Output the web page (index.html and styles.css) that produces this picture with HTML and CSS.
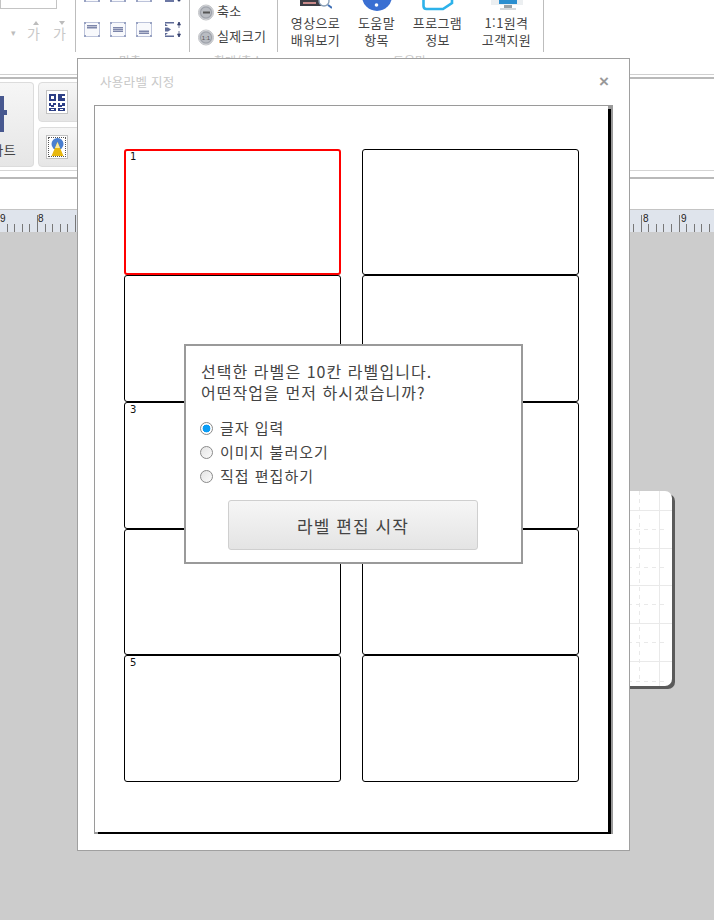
FILE: index.html
```html
<!DOCTYPE html>
<html lang="ko">
<head>
<meta charset="utf-8">
<title>사용라벨 지정</title>
<link rel="stylesheet" href="styles.css">
</head>
<body>
<svg class="defs" width="0" height="0" aria-hidden="true">
  <defs>
    <g id="frame">
      <rect x="0.5" y="0.5" width="15" height="14" fill="#f8f9fc" stroke="#bcc3da"/>
      <rect x="0" y="0" width="2" height="2" fill="#98a2c2"/><rect x="14" y="0" width="2" height="2" fill="#98a2c2"/>
      <rect x="0" y="13" width="2" height="2" fill="#98a2c2"/><rect x="14" y="13" width="2" height="2" fill="#98a2c2"/>
    </g>
  </defs>
</svg>
<div class="app">
  <header class="ribbon-top">
    <section class="group group-font">
      <div class="group-body">
        <div class="font-box"></div>
        <div class="font-tools">
          <span class="caret">▾</span>
          <span class="size-up">가<i class="arrow-up"></i></span>
          <span class="size-down">가<i class="arrow-down"></i></span>
        </div>
      </div>
    </section>
    <section class="group group-align">
      <div class="group-body">
        <div class="icon-grid">
          <svg class="ic" viewBox="0 0 17 15"><use href="#frame"/><path d="M3 3h10v3H3z" fill="#7d86aa"/></svg>
          <svg class="ic" viewBox="0 0 17 15"><use href="#frame"/><path d="M3 5.5h10v4H3z" fill="#7d86aa"/></svg>
          <svg class="ic" viewBox="0 0 17 15"><use href="#frame"/><path d="M3 8.500h10v3H3z" fill="#7d86aa"/></svg>
          <svg class="ic ic-last" viewBox="0 0 17 15"><path d="M0 1h9v2H0zM0 5h7v2H0zM0 9h7v2H0zM0 13h9v2H0z" fill="#6c78a4"/><circle cx="14" cy="13" r="1.5" fill="#33406e"/></svg>
          <svg class="ic" viewBox="0 0 17 15"><use href="#frame"/><path d="M3 3h10v1.500H3zM3 5h10v1.500H3z" fill="#7d86aa"/></svg>
          <svg class="ic" viewBox="0 0 17 15"><use href="#frame"/><path d="M3 5h10v1.500H3zM3 7h10v1.500H3zM3 9h10v1H3z" fill="#7d86aa"/></svg>
          <svg class="ic" viewBox="0 0 17 15"><use href="#frame"/><path d="M3 8.500h10v1.500H3zM3 10.500h10v1.500H3z" fill="#7d86aa"/></svg>
          <svg class="ic ic-last" viewBox="0 0 17 15"><path d="M0 0h9v1.500H0l3 2.500H0v1.500h3L6 7.500 3 9.500H0V11h3l-3 2.500h9V15H0z" fill="#5f6b97"/><path d="M14 0v6M14 9v6M12.500 3l1.500-3 1.500 3zM12.500 12l1.500 3 1.500-3z" fill="#33406e" stroke="#33406e" stroke-width=".7"/></svg>
        </div>
      </div>
      <div class="group-label label-align">맞춤</div>
    </section>
    <section class="group group-zoom">
      <div class="group-body">
        <div class="zoom-row"><span class="zoom-ic"><i class="zoom-minus"></i></span><span>축소</span></div>
        <div class="zoom-row"><span class="zoom-ic"><b>1:1</b></span><span>실제크기</span></div>
      </div>
      <div class="group-label label-zoom">확대/축소</div>
    </section>
    <section class="group group-help">
      <div class="group-body help-body">
        <div class="help-item">
          <svg class="help-ic" viewBox="0 0 32 11"><rect x="0" y="0" width="26" height="6" fill="#3c3c44"/><rect x="3" y="2" width="13" height="2" fill="#c98a8a"/><circle cx="24" cy="1" r="5" fill="#fff" stroke="#8aa0b8" stroke-width="1.4"/><path d="M28 5l4 3" stroke="#3f6fb5" stroke-width="2"/></svg>
          <span>영상으로<br>배워보기</span>
        </div>
        <div class="help-item">
          <svg class="help-ic" viewBox="0 0 32 11"><circle cx="16" cy="-4" r="15" fill="#3a6fd2"/><circle cx="15.5" cy="5" r="1.8" fill="#fff"/></svg>
          <span>도움말<br>항목</span>
        </div>
        <div class="help-item">
          <svg class="help-ic" viewBox="0 0 32 11"><path d="M1.500 -4V6q0 3 3 3H21l9-6V-4" fill="#fff" stroke="#2db2ea" stroke-width="2.600"/></svg>
          <span>프로그램<br>정보</span>
        </div>
        <div class="help-item help-last">
          <svg class="help-ic" viewBox="0 0 32 11"><rect x="0" y="0" width="32" height="5" fill="#eceff1"/><rect x="8" y="0" width="18" height="4" fill="#2b8fd0"/><rect x="13" y="5" width="8" height="3" fill="#9aa3a8"/><rect x="9" y="8" width="16" height="2" fill="#d5d9dc"/></svg>
          <span>1:1원격<br>고객지원</span>
        </div>
      </div>
      <div class="group-label label-help">도움말</div>
    </section>
  </header>

  <div class="ribbon-second">
    <div class="big-btn">
      <svg class="plus" viewBox="0 0 8 36"><path d="M0 0h4v14h3v5H4v17H0z" fill="#47588f"/></svg>
      <span class="big-label">차트</span>
    </div>
    <div class="small-col">
      <div class="small-btn">
        <span class="thumb">
          <svg viewBox="0 0 16 17" width="16" height="17"><path fill="#2d3f86" d="M0 0h7v7H0zM9 0h7v2h-3v2h3v3H9zM0 9h2v2h2V9h3v2H5v2H2v-1H0zM9 9h2v2h2V9h3v3h-3v1H9zM0 14h7v3H0zM9 14h7v3H9z"/><path fill="#fff" d="M2 2h3v3H2zM2 15h3v1H2zM11 15h3v1h-3z"/></svg>
        </span>
      </div>
      <div class="small-btn">
        <span class="thumb thumb-photo">
          <svg viewBox="0 0 13 18" width="13" height="18"><circle cx="6.500" cy="6" r="6" fill="#4a7fd0"/><path d="M6.500 4l6 14H.5z" fill="#e8b80f"/><path d="M6.500 4l2.500 6H4z" fill="#f6e9a6"/></svg>
        </span>
      </div>
    </div>
  </div>

  <div class="ribbon-gap"></div>

  <div class="ruler">
    <div class="ruler-part ruler-left">
      <span class="num num-a">9</span>
      <span class="num num-b">8</span>
    </div>
    <div class="ruler-part ruler-right">
      <span class="num num-c">8</span>
      <span class="num num-d">9</span>
    </div>
  </div>

  <main class="canvas">
    <div class="paper">
      <svg class="paper-grid" viewBox="0 0 172 195" width="172" height="195">
        <g stroke="#e9e9e9" fill="none">
          <path d="M0 19.500H172M0 57.500H172M0 94.500H172M0 132.500H172M0 170.500H172M159.500 0V195"/>
          <path stroke-dasharray="4 4" d="M0 38.500H168M0 76.500H168M0 113.500H168M0 151.500H168M0 190.500H168M139.500 0V192"/>
        </g>
      </svg>
    </div>
  </main>

  <div class="dialog">
    <div class="dialog-head">
      <span class="dialog-title">사용라벨 지정</span>
      <span class="dialog-close">×</span>
    </div>
    <div class="sheet">
      <div class="cell cell-active"><span>1</span></div>
      <div class="cell"></div>
      <div class="cell"></div>
      <div class="cell"></div>
      <div class="cell"><span>3</span></div>
      <div class="cell"></div>
      <div class="cell"></div>
      <div class="cell"></div>
      <div class="cell"><span>5</span></div>
      <div class="cell"></div>
    </div>
    <div class="prompt">
      <p class="prompt-text">선택한 라벨은 10칸 라벨입니다.<br>어떤작업을 먼저 하시겠습니까?</p>
      <ul class="choices">
        <li><i class="radio radio-on"></i>글자 입력</li>
        <li><i class="radio"></i>이미지 불러오기</li>
        <li><i class="radio"></i>직접 편집하기</li>
      </ul>
      <button class="start-btn" type="button">라벨 편집 시작</button>
    </div>
  </div>
</div>
</body>
</html>
```

FILE: styles.css
```css
* { box-sizing: border-box; }
html, body { margin: 0; padding: 0; height: 100%; }
body {
  width: 714px; height: 920px; overflow: hidden; background: #fff;
  font-family: "Noto Sans CJK KR", "Noto Sans", sans-serif; color: #333;
}
.defs { position: absolute; }
.app { position: relative; width: 714px; height: 920px; display: flex; flex-direction: column; overflow: hidden; }

/* top ribbon */
.ribbon-top { display: flex; height: 74px; flex: none; overflow: hidden; }
.group { flex: none; height: 74px; }
.group-body { height: 52px; border-right: 1px solid #bdbdbd; overflow: hidden; }
.group-label { font-size: 12px; line-height: 16px; color: #c8c8c8; margin-top: 1px; }
.group-font { width: 76px; }
.group-align { width: 114px; }
.group-zoom { width: 88px; }
.group-help { width: 266px; }
.font-box { width: 57px; height: 9px; border: 1px solid #c4c4c4; border-top: 0; }
.font-tools { display: flex; margin-top: 14px; font-size: 14px; color: #c8c8c8; line-height: 20px; }
.caret { font-size: 9px; margin-left: 11px; width: 16px; color: #bdbdbd; }
.size-up { width: 26px; position: relative; }
.size-down { position: relative; }
.arrow-up, .arrow-down { position: absolute; left: 6px; width: 0; height: 0; border-left: 3px solid transparent; border-right: 3px solid transparent; }
.arrow-up { top: -2px; border-bottom: 4px solid #bcbcbc; }
.arrow-down { top: -2px; border-top: 4px solid #bcbcbc; }
.icon-grid { display: grid; grid-template-columns: 17px 17px 17px 17px; column-gap: 9px; row-gap: 20px; margin: -13px 0 0 8px; }
.ic { width: 17px; height: 15px; display: block; }
.ic-last { transform: translateX(3px); }
.label-align { padding-left: 43px; }
.label-zoom { padding-left: 24px; }
.label-help { padding-left: 115px; }
.zoom-row { display: flex; align-items: center; gap: 3px; height: 25px; font-size: 13px; letter-spacing: .4px; color: #444; padding-left: 8px; }
.zoom-row:first-child { height: 21px; margin-bottom: 2px; }
.zoom-ic {
  width: 16px; height: 16px; border-radius: 50%; flex: none; display: flex; align-items: center; justify-content: center;
  background: radial-gradient(circle, #b9bcc2 45%, #9ca0a8 55%, #e6e7ea 75%); border: 1px solid #bfc1c5;
  transform: translateY(1.5px);
}
.zoom-ic b { font-size: 6px; font-weight: 400; color: #555; line-height: 1; letter-spacing: 0; font-family: "Liberation Sans", sans-serif; }
.zoom-minus { width: 7px; height: 2px; background: #555; display: block; }
.help-body { display: flex; padding-left: 7px; }
.help-item { width: 61px; display: flex; flex-direction: column; align-items: center; font-size: 13px; line-height: 17px; text-align: center; color: #444; letter-spacing: .4px; white-space: nowrap; }
.help-last { margin-left: 8px; }
.help-ic { width: 32px; height: 11px; display: block; margin-bottom: 3px; flex: none; overflow: hidden; }

/* second ribbon */
.ribbon-second {
  height: 96px; flex: none; display: flex; gap: 4px; padding: 7px 0 0;
  border-top: 1px solid #d0d0d0;
  box-shadow: inset 0 2px 0 #fff, inset 0 4px 0 #b9b9b9;
}
.big-btn {
  width: 34px; height: 85px; border: 1px solid #dcdcdc; border-left: 0; border-radius: 0 4px 4px 0;
  background: linear-gradient(#f6f6f6, #e6e6e6); position: relative; flex: none; overflow: hidden;
}
.plus { width: 8px; height: 36px; position: absolute; left: 0; top: 13px; }
.big-label { position: absolute; right: 17px; top: 58px; font-size: 13px; line-height: 18px; color: #444; white-space: nowrap; letter-spacing: .4px; }
.small-col { display: flex; flex-direction: column; gap: 5px; }
.small-btn {
  width: 48px; height: 40px; border: 1px solid #dcdcdc; border-radius: 4px;
  background: linear-gradient(#f6f6f6, #e6e6e6); display: flex; align-items: center; padding-left: 7px;
}
.thumb { width: 22px; height: 24px; background: #fff; border: 1px solid #c2c2c2; display: flex; align-items: center; justify-content: center; }
.thumb-photo { outline: 1px dotted #555; outline-offset: -3px; }
.ribbon-gap {
  height: 40px; flex: none; border-top: 1px solid #d4d4d4;
  box-shadow: inset 0 6px 0 #fff, inset 0 8px 0 #b9b9b9;
  border-bottom: 1px solid #c4c4c4;
}

/* ruler */
.ruler { height: 22px; flex: none; display: flex; justify-content: space-between; background: #dfe4ec; }
.ruler-part {
  position: relative; width: 84px; height: 22px;
  background-image:
    repeating-linear-gradient(90deg, #777 0 1px, transparent 1px 38px),
    repeating-linear-gradient(90deg, #777 0 1px, transparent 1px 7.6px);
  background-size: 100% 17px, 100% 8px;
  background-repeat: no-repeat;
  background-position: 0 5px, 0 14px;
}
.ruler-left { background-position: -1px 5px, -1px 14px; width: 78px; }
.ruler-right { background-position: 11px 5px, 3.4px 14px; }
.num { position: absolute; top: 2px; font-size: 10px; line-height: 14px; color: #222; font-family: "Liberation Sans", sans-serif; }
.num-a { left: 0; }
.num-b { left: 38px; }
.num-c { left: 13px; }
.num-d { left: 51px; }

/* canvas */
.canvas { flex: 1; background: #ccc; position: relative; }
.paper {
  position: absolute; left: 500px; top: 259px; width: 172px; height: 195px;
  background: #fff; border-radius: 0 7px 7px 0;
  box-shadow: 3px 3px 0 #5a5a5a;
}
.paper-grid { display: block; }

/* dialog */
.dialog {
  position: absolute; left: 77px; top: 58px; width: 553px; height: 793px;
  background: #fff; border: 1px solid #a0a0a0;
}
.dialog-head { height: 46px; display: flex; justify-content: space-between; padding: 13px 20px 0 22px; }
.dialog-title { font-size: 12.5px; line-height: 20px; color: #c8c8c8; letter-spacing: .3px; }
.dialog-close { font-size: 17px; line-height: 20px; color: #999; font-weight: 700; font-family: "Liberation Sans", sans-serif; }
.sheet {
  position: relative; margin-left: 16px; width: 517px; height: 729px;
  border-top: 1px solid #9a9a9a; border-left: 1px solid #9a9a9a;
  border-right: 3px solid #000; border-bottom: 2px solid #000;
  box-shadow: 2px 0 0 #9a9a9a;
  display: grid; grid-template-columns: 217px 217px; column-gap: 21px;
  grid-template-rows: 126px 127px 127px 126px 127px; align-content: start; padding: 43px 0 0 29px;
}
.sheet::before { content: ""; position: absolute; left: -1px; bottom: -2px; width: 4px; height: 2px; background: #9a9a9a; }
.sheet::after { content: ""; position: absolute; right: -3px; top: -1px; width: 3px; height: 4px; background: #9a9a9a; }
.cell { border: 1px solid #000; border-radius: 3px; font-size: 10px; line-height: 12px; color: #111; padding: 1px 0 0 5px; font-family: "DejaVu Sans", sans-serif; }
.cell-active { border: 2px solid #f00; padding: 0 0 0 4px; }

.prompt {
  position: absolute; left: 106px; top: 285px; width: 339px; height: 220px;
  background: #fff; border: 2px solid #9a9a9a; padding: 15px 15px 0 14px;
}
.prompt-text { margin: 0 0 0 1px; font-size: 16px; line-height: 21px; color: #444; letter-spacing: 1.05px; white-space: nowrap; }
.choices { list-style: none; margin: 13px 0 0; padding: 0; font-size: 15px; line-height: 24px; color: #444; letter-spacing: 1px; }
.choices li { display: flex; align-items: center; gap: 7px; height: 24px; }
.radio { width: 13px; height: 13px; border-radius: 50%; border: 1px solid #8a8a8a; background: linear-gradient(135deg, #e4e4e4, #fbfbfb); flex: none; display: block; }
.radio-on { background: radial-gradient(circle, #0a9df5 0 3.6px, #fff 4.2px); }
.start-btn {
  display: block; margin: 12px 0 0 28px; width: 250px; height: 50px;
  border: 1px solid #cfcfcf; border-radius: 3px; background: linear-gradient(#f6f6f6, #e4e4e4);
  font-family: inherit; font-size: 17px; color: #444; letter-spacing: 1.1px; padding: 0;
}
```
